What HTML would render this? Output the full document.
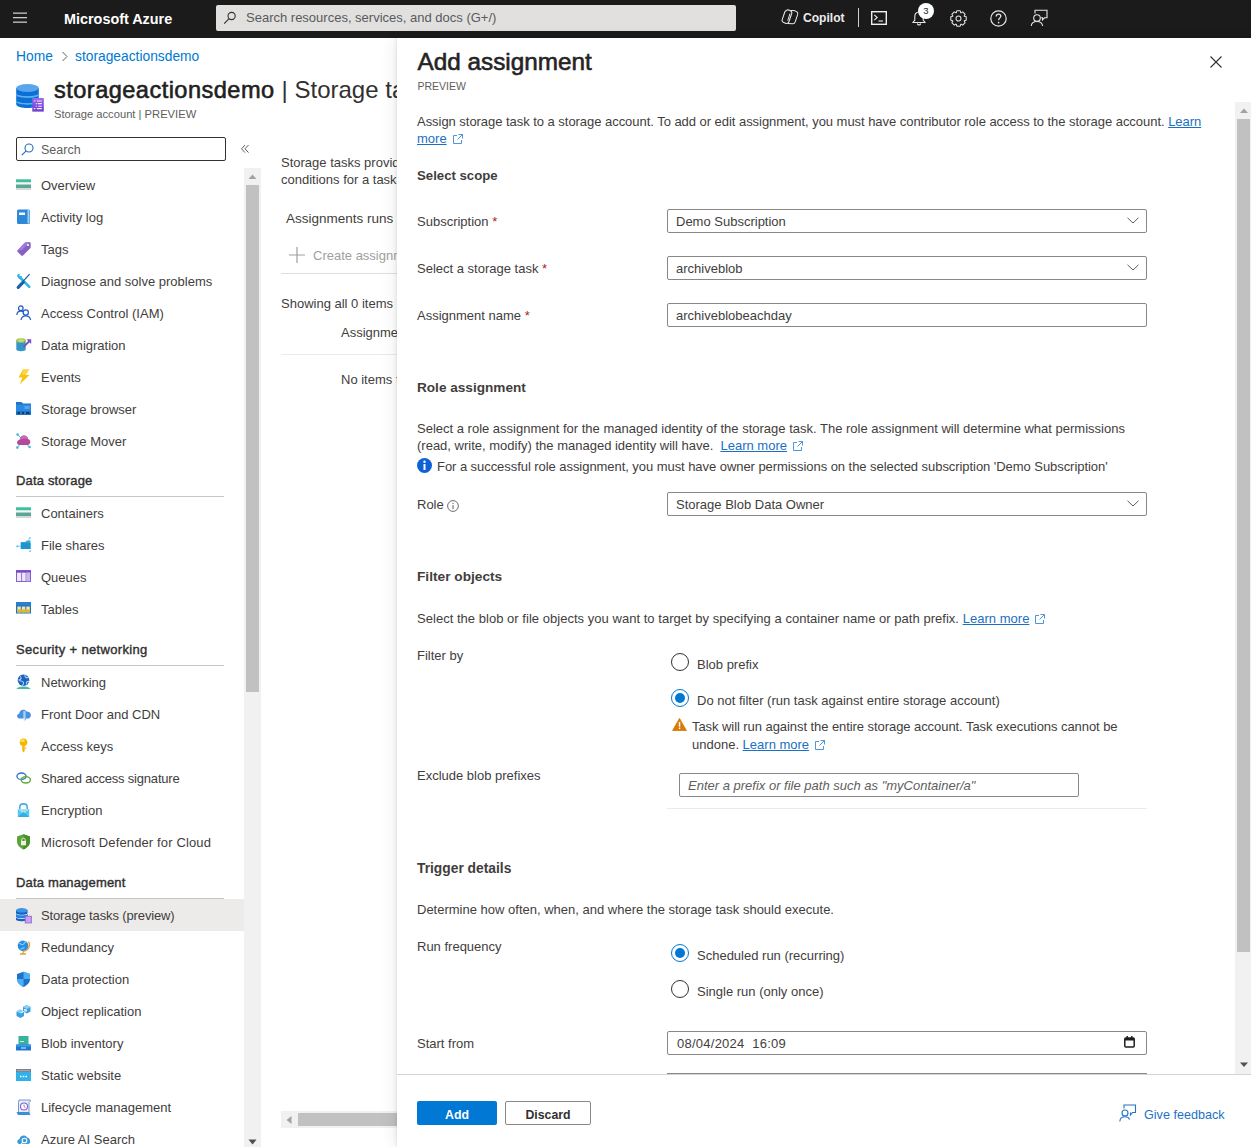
<!DOCTYPE html>
<html><head><meta charset="utf-8">
<style>
*{box-sizing:border-box;margin:0;padding:0}
html,body{width:1251px;height:1147px;overflow:hidden;background:#fff}
body{font-family:"Liberation Sans",sans-serif;color:#3f3e3d;font-size:13px;position:relative}
.a{position:absolute;white-space:nowrap}
.t{position:absolute;white-space:nowrap;font-size:13px;line-height:16px}
#top{position:absolute;left:0;top:0;width:1251px;height:38px;background:#1b1b1b}
.ico{position:absolute}
.mi{position:absolute;left:41px;font-size:13px;line-height:16px;white-space:nowrap;color:#3f3e3d}
.mic{position:absolute;left:16px;width:16px;height:16px}
.sh{position:absolute;left:16px;font-size:13px;line-height:16px;-webkit-text-stroke:0.4px #323130;color:#323130;white-space:nowrap}
.shl{position:absolute;left:16px;width:208px;height:1px;background:#c8c6c4}
.lbl{position:absolute;left:417px;font-size:13px;line-height:16px;white-space:nowrap;color:#323130}
.inp{position:absolute;left:667px;width:480px;height:24px;border:1px solid #8a8886;border-radius:2px;background:#fff}
.inp span{position:absolute;left:8px;top:3.5px;font-size:13px;line-height:16px;white-space:nowrap;color:#3f3e3d}
.chev{position:absolute;right:7px;top:7px}
.h2{position:absolute;left:417px;font-size:14px;line-height:18px;font-weight:bold;color:#323130;white-space:nowrap}
.lnk{color:#1a70c2;text-decoration:underline;text-underline-offset:1px;text-decoration-thickness:1px}
.radio{position:absolute;width:18px;height:18px;border-radius:50%;border:1px solid #323130;background:#fff}
.radio.on{border-color:#0078d4}
.radio.on::after{content:"";position:absolute;left:3px;top:3px;width:10px;height:10px;border-radius:50%;background:#0078d4}
</style></head>
<body>
<!-- TOP BAR -->
<div id="top">
  <svg class="ico" style="left:13px;top:12px" width="15" height="12" viewBox="0 0 15 12"><rect x="0" y="0.5" width="14" height="1.3" fill="#c8c8c8"/><rect x="0" y="5" width="14" height="1.3" fill="#c8c8c8"/><rect x="0" y="9.5" width="14" height="1.3" fill="#c8c8c8"/></svg>
  <div class="a" style="left:64px;top:10.8px;font-size:14.4px;line-height:17px;font-weight:bold;color:#fff">Microsoft Azure</div>
  <div class="a" style="left:216px;top:5px;width:520px;height:26px;background:#e1e0df;border-radius:2px"></div>
  <svg class="ico" style="left:223px;top:11px" width="14" height="14" viewBox="0 0 14 14"><circle cx="8.6" cy="5" r="3.6" fill="none" stroke="#323130" stroke-width="1.1"/><line x1="6" y1="7.6" x2="1.2" y2="12.6" stroke="#323130" stroke-width="1.1"/></svg>
  <div class="a" style="left:246px;top:10px;font-size:13px;line-height:16px;color:#5a5a5a">Search resources, services, and docs (G+/)</div>

  <svg class="ico" style="left:781px;top:9px" width="18" height="16" viewBox="0 0 18 16"><path d="M5.5 1.2 C6.2 0.8 7.5 0.8 8.5 1.3 L10 2.2 C10.8 2.7 11 3.5 10.7 4.5 L8 12.5 C7.6 13.8 6.5 14.8 5 14.4 L2.3 13.3 C1.2 12.8 0.8 11.8 1.2 10.6 L3.8 3 C4.1 2.2 4.7 1.6 5.5 1.2 Z" fill="none" stroke="#e8e8e8" stroke-width="1.05"/><path d="M9.5 1.5 L12.5 1.6 C13.8 1.8 14.5 2.2 15.7 2.8 C16.7 3.3 17 4.3 16.7 5.4 L14.2 12.8 C13.8 14 12.8 14.8 11.5 14.7 L7 14.6" fill="none" stroke="#e8e8e8" stroke-width="1.05"/><path d="M9 4.5 L6.8 11.5" stroke="#e8e8e8" stroke-width="1"/></svg>
  <div class="a" style="left:803px;top:9.5px;font-size:12.1px;line-height:16px;font-weight:bold;color:#ececec">Copilot</div>
  <div class="a" style="left:858px;top:8px;width:1px;height:19px;background:#d0d0d0"></div>
  <svg class="ico" style="left:871px;top:11px" width="16" height="14" viewBox="0 0 16 14"><rect x="0.7" y="0.7" width="14.6" height="12.6" fill="none" stroke="#f0f0f0" stroke-width="1.4"/><path d="M3.3 3.8 L6.2 6.5 L3.3 9.2" fill="none" stroke="#f0f0f0" stroke-width="1.1"/><line x1="7.5" y1="10" x2="12" y2="10" stroke="#f0f0f0" stroke-width="1.1"/></svg>
  <svg class="ico" style="left:911px;top:10px" width="16" height="16" viewBox="0 0 16 16"><path d="M8 2 C5 2 3.8 4.2 3.8 6.5 L3.8 10 L2 12.5 L14 12.5 L12.2 10 L12.2 6.5 C12.2 4.2 11 2 8 2 Z" fill="none" stroke="#e6e6e6" stroke-width="1.1"/><path d="M6.3 13.5 C6.6 14.6 7.2 15 8 15 C8.8 15 9.4 14.6 9.7 13.5" fill="none" stroke="#e6e6e6" stroke-width="1.1"/></svg>
  <div class="a" style="left:918px;top:3px;width:16px;height:16px;border-radius:50%;background:#fff;color:#1b1b1b;font-size:9.5px;line-height:16px;text-align:center">3</div>
  <svg class="ico" style="left:950px;top:10px" width="17" height="17" viewBox="0 0 17 17"><path d="M14.30 6.32 L16.21 6.78 L16.21 10.22 L14.30 10.68 L14.15 11.06 L15.17 12.73 L12.73 15.17 L11.06 14.15 L10.68 14.30 L10.22 16.21 L6.78 16.21 L6.32 14.30 L5.94 14.15 L4.27 15.17 L1.83 12.73 L2.85 11.06 L2.70 10.68 L0.79 10.22 L0.79 6.78 L2.70 6.32 L2.85 5.94 L1.83 4.27 L4.27 1.83 L5.94 2.85 L6.32 2.70 L6.78 0.79 L10.22 0.79 L10.68 2.70 L11.06 2.85 L12.73 1.83 L15.17 4.27 L14.15 5.94 Z" fill="none" stroke="#e6e6e6" stroke-width="1.05" stroke-linejoin="round"/><circle cx="8.5" cy="8.5" r="2.5" fill="none" stroke="#e6e6e6" stroke-width="1.05"/></svg>
  <svg class="ico" style="left:990px;top:10px" width="17" height="17" viewBox="0 0 17 17"><circle cx="8.5" cy="8.5" r="7.7" fill="none" stroke="#e6e6e6" stroke-width="1.2"/><path d="M6.2 6.5 C6.2 4.9 7.2 4.1 8.5 4.1 C9.8 4.1 10.8 4.9 10.8 6.2 C10.8 7.8 8.6 8 8.6 10.2" fill="none" stroke="#e6e6e6" stroke-width="1.3"/><circle cx="8.6" cy="12.6" r="0.85" fill="#e6e6e6"/></svg>
  <svg class="ico" style="left:1030px;top:9px" width="18" height="18" viewBox="0 0 18 18"><circle cx="7" cy="9" r="3.3" fill="none" stroke="#e6e6e6" stroke-width="1.1"/><path d="M1.2 17 C1.5 14 3.8 12.5 7 12.5 C10.2 12.5 12.2 14 12.6 17" fill="none" stroke="#e6e6e6" stroke-width="1.1"/><path d="M5 4.5 L5 1.2 L17 1.2 L17 8.8 L14.5 8.8 L12.5 10.8 L12.5 8.8 L11 8.8" fill="none" stroke="#e6e6e6" stroke-width="1.1"/></svg>
</div>
<!-- LEFT -->
<div class="a" style="left:16px;top:48.5px;font-size:13.8px;line-height:16px;color:#0078d4">Home</div>
<svg class="ico" style="left:61px;top:51px" width="8" height="11" viewBox="0 0 8 11"><path d="M1.5 1 L6 5.5 L1.5 10" fill="none" stroke="#605e5c" stroke-width="1"/></svg>
<div class="a" style="left:75px;top:48.5px;font-size:13.8px;line-height:16px;color:#0078d4">storageactionsdemo</div>
<svg class="ico" style="left:16px;top:84px" width="28" height="28" viewBox="0 0 28 28"><defs><linearGradient id="pg" x1="0" y1="0" x2="0" y2="1"><stop offset="0" stop-color="#9b6cf0"/><stop offset="1" stop-color="#6a3cc8"/></linearGradient></defs><path d="M0.2 4 L0.2 20 C0.2 25.3 22.8 25.3 22.8 20 L22.8 4 Z" fill="#0b6fd3"/><path d="M0.2 9 C0.2 13.2 22.8 13.2 22.8 9 L22.8 10.8 C22.8 15 0.2 15 0.2 10.8 Z" fill="#5cb0f5"/><path d="M0.2 16 C0.2 20.2 22.8 20.2 22.8 16 L22.8 17.6 C22.8 21.8 0.2 21.8 0.2 17.6 Z" fill="#5cb0f5"/><ellipse cx="11.5" cy="4" rx="11.3" ry="4" fill="#5aa6ee"/><rect x="16.3" y="14" width="11.5" height="13.6" fill="url(#pg)"/><path d="M17.8 17 L19.3 17 M20.8 17 L25.8 17 M19.8 19.6 L20.8 19.6 M21.8 19.6 L25.8 19.6 M19.8 22.2 L20.8 22.2 M22.3 22.2 L25.8 22.2 M17.8 24.6 L19.3 24.6 M20.8 24.6 L25.8 24.6" stroke="#f0e6ff" stroke-width="1.1"/></svg>
<div class="a" style="left:54px;top:76px;font-size:23.6px;letter-spacing:0.45px;line-height:28px;-webkit-text-stroke:0.6px #1f1f1f;color:#1f1f1f">storageactionsdemo <span style="-webkit-text-stroke:0;font-size:24px;letter-spacing:0;color:#323130">| Storage tasks (preview)</span></div>
<div class="a" style="left:54px;top:107px;font-size:11.2px;line-height:14px;color:#605e5c">Storage account | PREVIEW</div>
<div class="a" style="left:16px;top:137px;width:210px;height:24px;border:1px solid #323130;border-radius:2px"></div>
<svg class="ico" style="left:21px;top:143px" width="13" height="13" viewBox="0 0 13 13"><circle cx="8" cy="5" r="4" fill="none" stroke="#1f6fc0" stroke-width="1.1"/><line x1="5.2" y1="7.8" x2="0.8" y2="12.2" stroke="#1f6fc0" stroke-width="1.2"/></svg>
<div class="a" style="left:41px;top:142px;font-size:12.5px;line-height:16px;color:#605e5c">Search</div>
<svg class="ico" style="left:240px;top:144px" width="10" height="10" viewBox="0 0 10 10"><path d="M5 1 L1.5 4.8 L5 8.6 M8.5 1 L5 4.8 L8.5 8.6" fill="none" stroke="#605e5c" stroke-width="1"/></svg>
<div class="a" style="left:244px;top:168px;width:17px;height:979px;background:#f1f1f1"></div>
<div class="a" style="left:246px;top:185px;width:13px;height:507px;background:#c1c1c1"></div>
<svg class="ico" style="left:248px;top:174px" width="9" height="6" viewBox="0 0 9 6"><path d="M0.5 5 L4.5 0.5 L8.5 5 Z" fill="#a3a3a3"/></svg>
<svg class="ico" style="left:248px;top:1139px" width="9" height="6" viewBox="0 0 9 6"><path d="M0.5 0.5 L4.5 5.5 L8.5 0.5 Z" fill="#505050"/></svg>
<div class="a" style="left:0;top:899px;width:244px;height:32px;background:#edebe9"></div>
<div class="sh" style="top:472.5px;letter-spacing:0.17px">Data storage</div>
<div class="shl" style="top:496px"></div>
<div class="sh" style="top:641.5px;letter-spacing:0.33px">Security + networking</div>
<div class="shl" style="top:665px"></div>
<div class="sh" style="top:875.0px;letter-spacing:0.17px">Data management</div>
<div class="shl" style="top:898px"></div>
<svg class="mic" style="top:176.5px;overflow:visible" viewBox="0 0 16 16"><g transform="translate(0,2)"><rect x="0" y="0.3" width="15" height="3.2" fill="#3dbf9a"/><rect x="0" y="3.5" width="15" height="2" fill="#eef7f4"/><rect x="0" y="5.5" width="15" height="3.5" fill="#5fa595"/><rect x="0" y="9" width="15" height="2" fill="#d0dbd8"/></g></svg>
<div class="mi" style="top:177.5px">Overview</div>
<svg class="mic" style="top:208.5px;overflow:visible" viewBox="0 0 16 16"><g transform="translate(0,0.5)"><rect x="1" y="0" width="13" height="14.5" rx="1.5" fill="#2e88d8"/><rect x="11.5" y="0.5" width="2" height="13.5" fill="#9fd0f5"/><rect x="3" y="3" width="6" height="2.5" fill="#fff"/></g></svg>
<div class="mi" style="top:209.5px">Activity log</div>
<svg class="mic" style="top:240.5px;overflow:visible" viewBox="0 0 16 16"><path d="M1.5 9.5 L8.5 2 C9 1.5 9.5 1.3 10.2 1.3 L13.5 1.3 C14.3 1.3 14.7 1.8 14.7 2.5 L14.7 6 C14.7 6.6 14.5 7 14 7.5 L7 14.5 C6.5 15 5.8 15 5.3 14.5 L1.5 10.8 C1.1 10.4 1.1 9.9 1.5 9.5 Z" fill="#8661c5"/><path d="M1.5 9.5 L8.5 2 C9 1.5 9.5 1.3 10.2 1.3 L13.5 1.3 L6 9 Z" fill="#a07be0"/><circle cx="12" cy="4" r="1.1" fill="#fff"/></svg>
<div class="mi" style="top:241.5px">Tags</div>
<svg class="mic" style="top:272.5px;overflow:visible" viewBox="0 0 16 16"><path d="M3.5 4 L13.3 13.8" stroke="#32b4e4" stroke-width="2.6" stroke-linecap="round"/><path d="M1 3.2 C1 1.5 2.5 0.5 4 1 L3.2 2.8 L4.2 3.8 L6 3 C6.3 4.8 5 6.2 3.2 6 Z" fill="#32b4e4"/><path d="M13.6 1.2 L7 8.3" stroke="#1a5d95" stroke-width="1.2"/><path d="M2.2 14.3 L7.2 9.2" stroke="#1a62a8" stroke-width="3.2" stroke-linecap="round"/></svg>
<div class="mi" style="top:273.5px">Diagnose and solve problems</div>
<svg class="mic" style="top:304.5px;overflow:visible" viewBox="0 0 16 16"><circle cx="4.8" cy="3.2" r="2.3" fill="none" stroke="#1f5bbf" stroke-width="1.2"/><path d="M0.8 10 C1 7.3 2.7 6.2 4.8 6.2 C5.8 6.2 6.5 6.5 7 7" fill="none" stroke="#1f5bbf" stroke-width="1.2"/><circle cx="9.8" cy="7.5" r="2.6" fill="none" stroke="#1f5bbf" stroke-width="1.2"/><path d="M5 15 C5.4 12 7.3 10.8 9.8 10.8 C12.3 10.8 14.2 12 14.6 15" fill="none" stroke="#1f5bbf" stroke-width="1.2"/></svg>
<div class="mi" style="top:305.5px">Access Control (IAM)</div>
<svg class="mic" style="top:336.5px;overflow:visible" viewBox="0 0 16 16"><path d="M0.3 3.5 L0.3 12.5 C0.3 14.8 9.7 14.8 9.7 12.5 L9.7 3.5 Z" fill="#3597c9"/><ellipse cx="5" cy="3.5" rx="4.7" ry="2.3" fill="#9ac73c"/><ellipse cx="5" cy="3.5" rx="3" ry="1.2" fill="#c5e08a"/><path d="M7.5 10 L14 3.5" stroke="#7e4fc0" stroke-width="1.8"/><path d="M10.5 2.2 L15.2 2.2 L15.2 6.9 Z" fill="#7e4fc0"/></svg>
<div class="mi" style="top:337.5px">Data migration</div>
<svg class="mic" style="top:368.5px;overflow:visible" viewBox="0 0 16 16"><path d="M7 0.5 L13 0.5 L9.5 6 L13.5 6 L3.5 15.5 L6.5 8.5 L2.5 8.5 Z" fill="#f8c20a"/><path d="M7 0.5 L13 0.5 L9.5 6 L6 6 Z" fill="#fcd545"/></svg>
<div class="mi" style="top:369.5px">Events</div>
<svg class="mic" style="top:400.5px;overflow:visible" viewBox="0 0 16 16"><path d="M0 1 L5.5 1 L7 2.5 L15 2.5 L15 14 L0 14 Z" fill="#1c74cc"/><rect x="0" y="3.5" width="15" height="6.5" fill="#2a8ae0"/><rect x="8.5" y="5" width="5" height="3" fill="#53a6ee"/><rect x="1.5" y="11" width="12" height="2" fill="#0d3d78"/><path d="M4 12 L6 12 M8 12 L10 12" stroke="#8fc4f4" stroke-width="0.8"/></svg>
<div class="mi" style="top:401.5px">Storage browser</div>
<svg class="mic" style="top:432.5px;overflow:visible" viewBox="0 0 16 16"><path d="M1.8 1.6 L5 5 M1.2 14.6 L4 11.5 M13.6 14 L11 11.5" stroke="#48b8d8" stroke-width="1"/><circle cx="1.6" cy="1.6" r="1.3" fill="#48b8d8"/><circle cx="1.3" cy="14.6" r="1.3" fill="#48b8d8"/><circle cx="13.6" cy="14" r="1.3" fill="#48b8d8"/><path d="M3.8 12 C1.5 12 0.8 10.5 1.1 9 C1.4 7.6 2.5 7 3.6 7 C3.8 4.5 5.8 2.6 8 2.6 C10.2 2.6 11.8 4 12.2 6.2 C13.6 6.4 14.5 7.6 14.3 9.2 C14.1 10.8 13 12 11.5 12 Z" fill="#b4479e"/><path d="M3.6 7 C3.8 4.5 5.8 2.6 8 2.6 C10.2 2.6 11.8 4 12.2 6.2 C9 5.5 6 6 3.6 7 Z" fill="#c66ab4"/></svg>
<div class="mi" style="top:433.5px">Storage Mover</div>
<svg class="mic" style="top:505.0px;overflow:visible" viewBox="0 0 16 16"><g transform="translate(0,2)"><rect x="0" y="0.3" width="15" height="3.2" fill="#3dbf9a"/><rect x="0" y="3.5" width="15" height="2" fill="#eef7f4"/><rect x="0" y="5.5" width="15" height="3.5" fill="#5fa595"/><rect x="0" y="9" width="15" height="2" fill="#d0dbd8"/></g></svg>
<div class="mi" style="top:506.0px">Containers</div>
<svg class="mic" style="top:537.0px;overflow:visible" viewBox="0 0 16 16"><path d="M4.8 5 L9 5 L11 3.5 L14.5 3.5 L14.5 12 L4.8 12 Z" fill="#32a6dc"/><rect x="4.8" y="6" width="9.7" height="6" fill="#1e95d0"/><circle cx="1.3" cy="9.3" r="1.1" fill="#5ac8f0"/><path d="M2 9.3 L4.8 9.3" stroke="#5ac8f0" stroke-width="0.8"/><path d="M12.5 3.5 L13.5 0.8" stroke="#5ac8f0" stroke-width="0.8"/><circle cx="13.8" cy="0.8" r="0.9" fill="#5ac8f0"/><circle cx="14" cy="14.2" r="0.9" fill="#5ac8f0"/></svg>
<div class="mi" style="top:538.0px">File shares</div>
<svg class="mic" style="top:569.0px;overflow:visible" viewBox="0 0 16 16"><g transform="translate(0,1.5)"><rect x="0.5" y="0" width="14" height="11" fill="#f0e9fb" stroke="#8661c5" stroke-width="1"/><rect x="0" y="0" width="15" height="2.2" fill="#7a48c8"/><rect x="5.2" y="2" width="0.9" height="9" fill="#8661c5"/><rect x="9.6" y="2" width="0.9" height="9" fill="#8661c5"/><rect x="10.5" y="2.2" width="3.5" height="8.5" fill="#c9b4ee"/></g></svg>
<div class="mi" style="top:570.0px">Queues</div>
<svg class="mic" style="top:601.0px;overflow:visible" viewBox="0 0 16 16"><g transform="translate(0,1)"><rect x="0" y="0" width="15" height="11.5" fill="#1e6fc3"/><rect x="0" y="0" width="15" height="3.5" fill="#2a7fd4"/><rect x="1.3" y="4.5" width="3.5" height="6" fill="#f3e7a6"/><rect x="5.8" y="4.5" width="3.5" height="6" fill="#f3e7a6"/><rect x="10.3" y="4.5" width="3.5" height="6" fill="#f3e7a6"/><rect x="1.3" y="7.5" width="12.5" height="3" fill="#d9b82e"/></g></svg>
<div class="mi" style="top:602.0px">Tables</div>
<svg class="mic" style="top:674.0px;overflow:visible" viewBox="0 0 16 16"><path d="M0.5 15 C1.5 11.5 13.5 11.5 14.5 15 Z" fill="#3fbfa0"/><circle cx="7.5" cy="6.2" r="5.8" fill="#1f5fbf"/><path d="M4 2.5 C6 3.5 5 5.5 3 6 C4.5 7.5 6.5 6.5 7.5 8.5 C8 10 6.5 11 6.5 12 M9 1 C8.5 3 10 4 12.5 3.5 M13 7.5 C11 7 10 8 10.5 10.5" stroke="#a8d8f8" stroke-width="1.1" fill="none"/></svg>
<div class="mi" style="top:675.0px">Networking</div>
<svg class="mic" style="top:706.0px;overflow:visible" viewBox="0 0 16 16"><path d="M3.5 12.5 C0.5 12.5 0.2 8.2 3.2 7.8 C3.2 3.8 8.6 2.2 10.6 5.4 C14 5.2 15.6 8.2 14.6 10.5 C14 12 13 12.5 12 12.5 Z" fill="#4a90e2"/><path d="M7.5 5 L8.8 5 L8.8 15 L7.5 15 Z" fill="#d8ecfc"/><path d="M8.8 5 C9.5 5 10 5.5 10 6 L10 13.5 L8.8 15 Z" fill="#7ab8f0"/></svg>
<div class="mi" style="top:707.0px">Front Door and CDN</div>
<svg class="mic" style="top:738.0px;overflow:visible" viewBox="0 0 16 16"><circle cx="7.5" cy="4.2" r="3.8" fill="#f5b800"/><path d="M6.3 7 L8.7 7 L8.7 13 L7.5 14.5 L6.3 13 Z" fill="#f5b800"/><rect x="8.7" y="9.5" width="1.5" height="1.2" fill="#f5b800"/><circle cx="7.5" cy="2.8" r="1.1" fill="#fff6c8"/><path d="M3.7 4 C3.8 2 5.5 0.5 7.5 0.5 L7.5 4 Z" fill="#ffd54a"/></svg>
<div class="mi" style="top:739.0px">Access keys</div>
<svg class="mic" style="top:770.0px;overflow:visible" viewBox="0 0 16 16"><g transform="translate(0,1)"><ellipse cx="5.5" cy="5.2" rx="4.6" ry="3.2" fill="none" stroke="#2d73c6" stroke-width="1.3"/><ellipse cx="9.8" cy="8.8" rx="4.6" ry="3.2" fill="none" stroke="#64a83a" stroke-width="1.4"/></g></svg>
<div class="mi" style="top:771.0px;letter-spacing:-0.2px">Shared access signature</div>
<svg class="mic" style="top:802.0px;overflow:visible" viewBox="0 0 16 16"><path d="M3.8 7 L3.8 5 C3.8 0.8 11.2 0.8 11.2 5 L11.2 7" fill="none" stroke="#4aa8e8" stroke-width="1.6"/><rect x="1.8" y="7" width="11.4" height="8" rx="0.6" fill="#50c8f0"/><path d="M1.8 7 L7.5 12 L13.2 7" fill="#9fe0f8"/><path d="M1.8 15 L7.5 10 L13.2 15 Z" fill="#2fb0e0"/></svg>
<div class="mi" style="top:803.0px">Encryption</div>
<svg class="mic" style="top:834.0px;overflow:visible" viewBox="0 0 16 16"><path d="M7.5 0.3 L14 2.5 L14 7.5 C14 11.5 10.5 14 7.5 15.5 C4.5 14 1 11.5 1 7.5 L1 2.5 Z" fill="#5ea23a"/><path d="M7.5 0.3 L14 2.5 L14 7.5 C14 11.5 10.5 14 7.5 15.5 Z" fill="#4d8f2e"/><rect x="5" y="7" width="5" height="4.3" fill="#eaf5e0"/><path d="M5.8 7 L5.8 5.6 C5.8 3.6 9.2 3.6 9.2 5.6 L9.2 7" fill="none" stroke="#eaf5e0" stroke-width="1"/></svg>
<div class="mi" style="top:835.0px;letter-spacing:0.14px">Microsoft Defender for Cloud</div>
<svg class="mic" style="top:907.0px;overflow:visible" viewBox="0 0 16 16"><g transform="translate(0,1)"><path d="M0 2.3 L0 11.5 C0 13.8 11.5 13.8 11.5 11.5 L11.5 2.3 Z" fill="#1062c4"/><ellipse cx="5.75" cy="2.3" rx="5.75" ry="2.3" fill="#3b97e6"/><path d="M0 5.6 C0 7.8 11.5 7.8 11.5 5.6 M0 8.8 C0 11 11.5 11 11.5 8.8" stroke="#ffffff" stroke-width="0.9" fill="none"/><path d="M0 6 C0 8 11.5 8 11.5 6 L11.5 8.4 C11.5 10.4 0 10.4 0 8.4 Z" fill="#2a80d8"/><rect x="8.8" y="7.8" width="7" height="7.6" fill="#9a5fd6"/><rect x="9.7" y="8.6" width="5.2" height="6" fill="#c3a4ef"/></g></svg>
<div class="mi" style="top:908.0px;letter-spacing:-0.13px">Storage tasks (preview)</div>
<svg class="mic" style="top:939.0px;overflow:visible" viewBox="0 0 16 16"><g transform="translate(0,0.5)"><circle cx="7" cy="6.3" r="5.3" fill="#2c8ce0"/><path d="M3 4 C4.5 3.5 5 5.5 7 5 C8.5 4.5 8 2 10 2.5 M4.5 10 C5 8.5 7 9 8.5 8" stroke="#7cd0f8" stroke-width="1.2" fill="none"/><path d="M12.5 2 C14.8 5.5 13 11.5 7 11.8 M7 11.8 L7 14 M4 14.5 L10 14.5" stroke="#e0a040" stroke-width="1.3" fill="none"/></g></svg>
<div class="mi" style="top:940.0px">Redundancy</div>
<svg class="mic" style="top:971.0px;overflow:visible" viewBox="0 0 16 16"><g transform="translate(0,0.5)"><path d="M7.5 0.3 L14 2.5 L14 7.5 C14 11.5 10.5 14 7.5 15.5 C4.5 14 1 11.5 1 7.5 L1 2.5 Z" fill="#2070d0"/><path d="M7.5 0.3 L14 2.5 L14 7.5 L7.5 7.5 Z" fill="#4ab0f0"/><path d="M1 7.5 L7.5 7.5 L7.5 15.5 C4.5 14 1 11.5 1 7.5 Z" fill="#4ab0f0"/></g></svg>
<div class="mi" style="top:972.0px">Data protection</div>
<svg class="mic" style="top:1003.0px;overflow:visible" viewBox="0 0 16 16"><g transform="translate(0,1)"><path d="M0.5 7.5 L4 5.5 L8 7.5 L8 12 L4.5 14 L0.5 12 Z" fill="#3aa0e0"/><path d="M0.5 7.5 L4 5.5 L8 7.5 L4.5 9.5 Z" fill="#8fd0f8"/><path d="M7 3 L10.5 1 L14.5 3 L14.5 7.5 L11 9.5 L7 7.5 Z" fill="#3aa0e0"/><path d="M7 3 L10.5 1 L14.5 3 L11 5 Z" fill="#8fd0f8"/><path d="M5 9 L10 6 M8 5.5 L10.5 5.8 L9.8 8" stroke="#ffffff" stroke-width="0.9" fill="none"/></g></svg>
<div class="mi" style="top:1004.0px">Object replication</div>
<svg class="mic" style="top:1035.0px;overflow:visible" viewBox="0 0 16 16"><g transform="translate(0,1)"><rect x="2.5" y="0" width="10" height="10" fill="#34b49a"/><rect x="4" y="5" width="4" height="1" fill="#c8f0e6"/><path d="M0 8.5 L15 8.5 L15 14.5 L0 14.5 Z" fill="#1e78d0"/><rect x="0" y="8.5" width="15" height="2" fill="#3c9ae8"/><rect x="5" y="11.5" width="5" height="1" fill="#e0f0ff"/></g></svg>
<div class="mi" style="top:1036.0px">Blob inventory</div>
<svg class="mic" style="top:1067.0px;overflow:visible" viewBox="0 0 16 16"><g transform="translate(0,2)"><rect x="0" y="0" width="15" height="12" fill="#32b0e8"/><rect x="0" y="0" width="15" height="3" fill="#707888"/><rect x="0.8" y="0.8" width="13.4" height="1.5" fill="#a0a8b8"/><path d="M4 7.5 L5.6 7.5 M6.7 7.5 L8.3 7.5 M9.4 7.5 L11 7.5" stroke="#fff" stroke-width="1.5"/></g></svg>
<div class="mi" style="top:1068.0px">Static website</div>
<svg class="mic" style="top:1099.0px;overflow:visible" viewBox="0 0 16 16"><g transform="translate(0,0.5)"><path d="M3 0.5 L14 0.5 C14.5 0.5 14.8 1 14.5 1.5 L13 3 L13 14 L2.5 14 L2.5 3 Z" fill="#e8eef8" stroke="#5a7fb8" stroke-width="0.8"/><circle cx="8" cy="7" r="3.5" fill="#fff" stroke="#8a5fd0" stroke-width="1.1"/><path d="M8 5 L8 7 L9.5 8.2" stroke="#8a5fd0" stroke-width="0.9" fill="none"/><path d="M0.5 12.5 L13 12.5 L14.5 15.5 L2 15.5 Z" fill="#3b8fd8"/></g></svg>
<div class="mi" style="top:1100.0px">Lifecycle management</div>
<svg class="mic" style="top:1131.0px;overflow:visible" viewBox="0 0 16 16"><g transform="translate(0,1)"><path d="M3.5 12 C0.5 12 0.5 7.5 3.5 7.3 C3.5 3.5 9.3 2.2 11 5.4 C14.5 5.3 15.5 12 12 12 Z" fill="#3a9ad8"/><circle cx="8.5" cy="8.5" r="2.3" fill="none" stroke="#fff" stroke-width="1.1"/><path d="M6.8 10.2 L5.3 11.8" stroke="#fff" stroke-width="1.1"/></g></svg>
<div class="mi" style="top:1132.0px">Azure AI Search</div>
<!-- /LEFT -->
<!-- BLADE -->
<div class="a" style="left:281px;top:155.00px;font-size:13px;line-height:16px;">Storage tasks provide a way to define conditions for a task</div>
<div class="a" style="left:281px;top:172.00px;font-size:13px;line-height:16px;">conditions for a task to run against storage accounts</div>
<div class="a" style="left:286px;top:211.12px;font-size:13.5px;line-height:16px;">Assignments runs</div>
<svg class="ico" style="left:289px;top:247px" width="16" height="16" viewBox="0 0 16 16"><path d="M8 0 L8 16 M0 8 L16 8" stroke="#a19f9d" stroke-width="1.2"/></svg>
<div class="a" style="left:313px;top:247.50px;font-size:13px;line-height:16px;color:#a19f9d">Create assignment</div>
<div class="a" style="left:281px;top:273px;width:120px;height:1px;background:#e1dfdd"></div>
<div class="a" style="left:281px;top:295.50px;font-size:13px;line-height:16px;">Showing all 0 items</div>
<div class="a" style="left:341px;top:325.00px;font-size:13px;line-height:16px;">Assignment name</div>
<div class="a" style="left:281px;top:354px;width:120px;height:1px;background:#edebe9"></div>
<div class="a" style="left:341px;top:371.50px;font-size:13px;line-height:16px;">No items found</div>
<div class="a" style="left:281px;top:1111px;width:120px;height:17px;background:#f1f1f1"></div>
<div class="a" style="left:298px;top:1113px;width:110px;height:13px;background:#c1c1c1"></div>
<svg class="ico" style="left:286px;top:1116px" width="6" height="8" viewBox="0 0 6 8"><path d="M5.5 0 L0.5 4 L5.5 8 Z" fill="#a3a3a3"/></svg>
<div class="a" style="left:397px;top:38px;width:854px;height:1109px;background:#fff;box-shadow:-1px 0 3px rgba(0,0,0,0.08),-3px 0 14px rgba(0,0,0,0.07)"></div>
<div class="a" style="left:417.5px;top:47.58px;font-size:24.3px;line-height:28px;-webkit-text-stroke:0.6px #252423;color:#252423">Add assignment</div>
<div class="a" style="left:417.5px;top:79.16px;font-size:10.5px;line-height:14px;color:#605e5c">PREVIEW</div>
<svg class="ico" style="left:1210px;top:56px" width="12" height="12" viewBox="0 0 12 12"><path d="M0.5 0.5 L11.5 11.5 M11.5 0.5 L0.5 11.5" stroke="#323130" stroke-width="1.1"/></svg>
<div class="a" style="left:417px;top:113.50px;font-size:13px;line-height:16px;letter-spacing:-0.04px">Assign storage task to a storage account. To add or edit assignment, you must have contributor role access to the storage account. <span class="lnk">Learn</span></div>
<div class="a" style="left:417px;top:130.50px;font-size:13px;line-height:16px;"><span class="lnk">more</span><svg style="display:inline-block;vertical-align:-1px;margin-left:6px" width="10" height="10" viewBox="0 0 10 10"><path d="M4 1.5 L0.5 1.5 L0.5 9.5 L8.5 9.5 L8.5 6" fill="none" stroke="#3b8ad6" stroke-width="0.9"/><path d="M5.5 0.5 L9.5 0.5 L9.5 4.5 M9.5 0.5 L4.5 5.5" fill="none" stroke="#3b8ad6" stroke-width="0.9"/></svg></div>
<div class="a" style="left:417px;top:168.43px;font-size:13.2px;line-height:16px;font-weight:bold">Select scope</div>
<div class="a" style="left:417px;top:213.50px;font-size:13px;line-height:16px;">Subscription <span style="color:#a4262c">*</span></div>
<div class="inp" style="top:209px"><span>Demo Subscription</span><svg class="chev" width="12" height="7" viewBox="0 0 12 7"><path d="M0.5 0.8 L6 6 L11.5 0.8" fill="none" stroke="#605e5c" stroke-width="1"/></svg></div>
<div class="a" style="left:417px;top:260.50px;font-size:13px;line-height:16px;">Select a storage task <span style="color:#a4262c">*</span></div>
<div class="inp" style="top:256px"><span>archiveblob</span><svg class="chev" width="12" height="7" viewBox="0 0 12 7"><path d="M0.5 0.8 L6 6 L11.5 0.8" fill="none" stroke="#605e5c" stroke-width="1"/></svg></div>
<div class="a" style="left:417px;top:307.50px;font-size:13px;line-height:16px;">Assignment name <span style="color:#a4262c">*</span></div>
<div class="inp" style="top:303px"><span>archiveblobeachday</span></div>
<div class="a" style="left:417px;top:380.29px;font-size:13.6px;line-height:16px;font-weight:bold">Role assignment</div>
<div class="a" style="left:417px;top:420.50px;font-size:13px;line-height:16px;">Select a role assignment for the managed identity of the storage task. The role assignment will determine what permissions</div>
<div class="a" style="left:417px;top:437.50px;font-size:13px;line-height:16px;">(read, write, modify) the managed identity will have. &nbsp;<span class="lnk">Learn more</span><svg style="display:inline-block;vertical-align:-1px;margin-left:6px" width="10" height="10" viewBox="0 0 10 10"><path d="M4 1.5 L0.5 1.5 L0.5 9.5 L8.5 9.5 L8.5 6" fill="none" stroke="#3b8ad6" stroke-width="0.9"/><path d="M5.5 0.5 L9.5 0.5 L9.5 4.5 M9.5 0.5 L4.5 5.5" fill="none" stroke="#3b8ad6" stroke-width="0.9"/></svg></div>
<svg class="ico" style="left:417px;top:458px" width="15" height="15" viewBox="0 0 15 15"><circle cx="7.5" cy="7.5" r="7.5" fill="#0f62d6"/><rect x="6.5" y="6" width="2" height="6" fill="#fff"/><circle cx="7.5" cy="3.8" r="1.2" fill="#fff"/></svg>
<div class="a" style="left:437px;top:458.50px;font-size:13px;line-height:16px;letter-spacing:-0.056px">For a successful role assignment, you must have owner permissions on the selected subscription 'Demo Subscription'</div>
<div class="a" style="left:417px;top:496.50px;font-size:13px;line-height:16px;">Role</div>
<svg class="ico" style="left:447px;top:500px" width="12" height="12" viewBox="0 0 12 12"><circle cx="6" cy="6" r="5.4" fill="none" stroke="#605e5c" stroke-width="0.9"/><rect x="5.5" y="5" width="1" height="4" fill="#605e5c"/><circle cx="6" cy="3.4" r="0.6" fill="#605e5c"/></svg>
<div class="inp" style="top:492px"><span>Storage Blob Data Owner</span><svg class="chev" width="12" height="7" viewBox="0 0 12 7"><path d="M0.5 0.8 L6 6 L11.5 0.8" fill="none" stroke="#605e5c" stroke-width="1"/></svg></div>
<div class="a" style="left:417px;top:569.25px;font-size:13.7px;line-height:16px;font-weight:bold">Filter objects</div>
<div class="a" style="left:417px;top:610.50px;font-size:13px;line-height:16px;letter-spacing:0.03px">Select the blob or file objects you want to target by specifying a container name or path prefix. <span class="lnk">Learn more</span><svg style="display:inline-block;vertical-align:-1px;margin-left:6px" width="10" height="10" viewBox="0 0 10 10"><path d="M4 1.5 L0.5 1.5 L0.5 9.5 L8.5 9.5 L8.5 6" fill="none" stroke="#3b8ad6" stroke-width="0.9"/><path d="M5.5 0.5 L9.5 0.5 L9.5 4.5 M9.5 0.5 L4.5 5.5" fill="none" stroke="#3b8ad6" stroke-width="0.9"/></svg></div>
<div class="a" style="left:417px;top:647.50px;font-size:13px;line-height:16px;">Filter by</div>
<div class="radio" style="left:671px;top:653px"></div>
<div class="a" style="left:697px;top:656.50px;font-size:13px;line-height:16px;">Blob prefix</div>
<div class="radio on" style="left:671px;top:689px"></div>
<div class="a" style="left:697px;top:692.50px;font-size:13px;line-height:16px;">Do not filter (run task against entire storage account)</div>
<svg class="ico" style="left:672px;top:718px" width="15" height="13" viewBox="0 0 17 15"><path d="M8.5 0.5 L16.5 14.5 L0.5 14.5 Z" fill="#d97a06" stroke="#d97a06" stroke-linejoin="round"/><rect x="7.7" y="4.5" width="1.7" height="5.5" fill="#fff"/><rect x="7.7" y="11" width="1.7" height="1.7" fill="#fff"/></svg>
<div class="a" style="left:692px;top:718.50px;font-size:13px;line-height:16px;letter-spacing:-0.066px">Task will run against the entire storage account. Task executions cannot be</div>
<div class="a" style="left:692px;top:736.50px;font-size:13px;line-height:16px;">undone. <span class="lnk">Learn more</span><svg style="display:inline-block;vertical-align:-1px;margin-left:6px" width="10" height="10" viewBox="0 0 10 10"><path d="M4 1.5 L0.5 1.5 L0.5 9.5 L8.5 9.5 L8.5 6" fill="none" stroke="#3b8ad6" stroke-width="0.9"/><path d="M5.5 0.5 L9.5 0.5 L9.5 4.5 M9.5 0.5 L4.5 5.5" fill="none" stroke="#3b8ad6" stroke-width="0.9"/></svg></div>
<div class="a" style="left:417px;top:767.50px;font-size:13px;line-height:16px;">Exclude blob prefixes</div>
<div class="a" style="left:679px;top:773px;width:400px;height:24px;border:1px solid #8a8886;border-radius:2px"></div>
<div class="a" style="left:688px;top:777.50px;font-size:13px;line-height:16px;font-style:italic;color:#605e5c">Enter a prefix or file path such as "myContainer/a"</div>
<div class="a" style="left:667px;top:808px;width:480px;height:1px;background:#edebe9"></div>
<div class="a" style="left:417px;top:861.22px;font-size:13.8px;line-height:16px;font-weight:bold">Trigger details</div>
<div class="a" style="left:417px;top:901.50px;font-size:13px;line-height:16px;">Determine how often, when, and where the storage task should execute.</div>
<div class="a" style="left:417px;top:938.50px;font-size:13px;line-height:16px;">Run frequency</div>
<div class="radio on" style="left:671px;top:944px"></div>
<div class="a" style="left:697px;top:947.50px;font-size:13px;line-height:16px;">Scheduled run (recurring)</div>
<div class="radio" style="left:671px;top:980px"></div>
<div class="a" style="left:697px;top:983.50px;font-size:13px;line-height:16px;">Single run (only once)</div>
<div class="a" style="left:417px;top:1035.50px;font-size:13px;line-height:16px;">Start from</div>
<div class="inp" style="top:1031px"><span style="left:9px;letter-spacing:0.25px">08/04/2024&nbsp; 16:09</span></div>
<svg class="ico" style="left:1124px;top:1036px" width="11" height="12" viewBox="0 0 11 12"><rect x="0.8" y="2" width="9.4" height="9" rx="1" fill="none" stroke="#1f1f1f" stroke-width="1.5"/><rect x="0.8" y="2" width="9.4" height="2.5" fill="#1f1f1f"/><rect x="2.5" y="0" width="1.4" height="2.5" fill="#1f1f1f"/><rect x="7.1" y="0" width="1.4" height="2.5" fill="#1f1f1f"/></svg>
<div class="a" style="left:667px;top:1073px;width:480px;height:1px;background:#8a8886"></div>
<div class="a" style="left:1235px;top:102px;width:16px;height:972px;background:#f1f1f1"></div>
<div class="a" style="left:1237px;top:119px;width:13px;height:833px;background:#c1c1c1"></div>
<svg class="ico" style="left:1240px;top:108px" width="8" height="6" viewBox="0 0 8 6"><path d="M0 5 L4 0.5 L8 5 Z" fill="#a3a3a3"/></svg>
<svg class="ico" style="left:1240px;top:1062px" width="8" height="6" viewBox="0 0 8 6"><path d="M0 0.5 L4 5 L8 0.5 Z" fill="#505050"/></svg>
<div class="a" style="left:397px;top:1074px;width:854px;height:1px;background:#d6d4d2"></div>
<div class="a" style="left:417px;top:1101px;width:80px;height:24px;background:#0078d4;border-radius:2px"></div>
<div class="a" style="left:417px;top:1106.74px;font-size:12.3px;line-height:16px;width:80px;text-align:center;font-weight:bold;color:#fff">Add</div>
<div class="a" style="left:505px;top:1101px;width:86px;height:24px;border:1px solid #8a8886;border-radius:2px"></div>
<div class="a" style="left:505px;top:1106.74px;font-size:12.3px;line-height:16px;width:86px;text-align:center;font-weight:bold;color:#323130">Discard</div>
<svg class="ico" style="left:1119px;top:1104px" width="18" height="18" viewBox="0 0 18 18"><circle cx="6" cy="9" r="3" fill="none" stroke="#2373c4" stroke-width="1.1"/><path d="M0.8 17.5 C1 14.5 3 12.8 6 12.8 C8.5 12.8 10 14 10.6 15.5" fill="none" stroke="#2373c4" stroke-width="1.1"/><path d="M5 4.5 L5 1 L16.5 1 L16.5 8.5 L13.5 8.5 L11.5 11 L11.5 8.5" fill="none" stroke="#2373c4" stroke-width="1.1"/></svg>
<div class="a" style="left:1144px;top:1106.63px;font-size:12.6px;line-height:16px;color:#2373c4">Give feedback</div>
<!-- /BLADE -->
</body></html>
